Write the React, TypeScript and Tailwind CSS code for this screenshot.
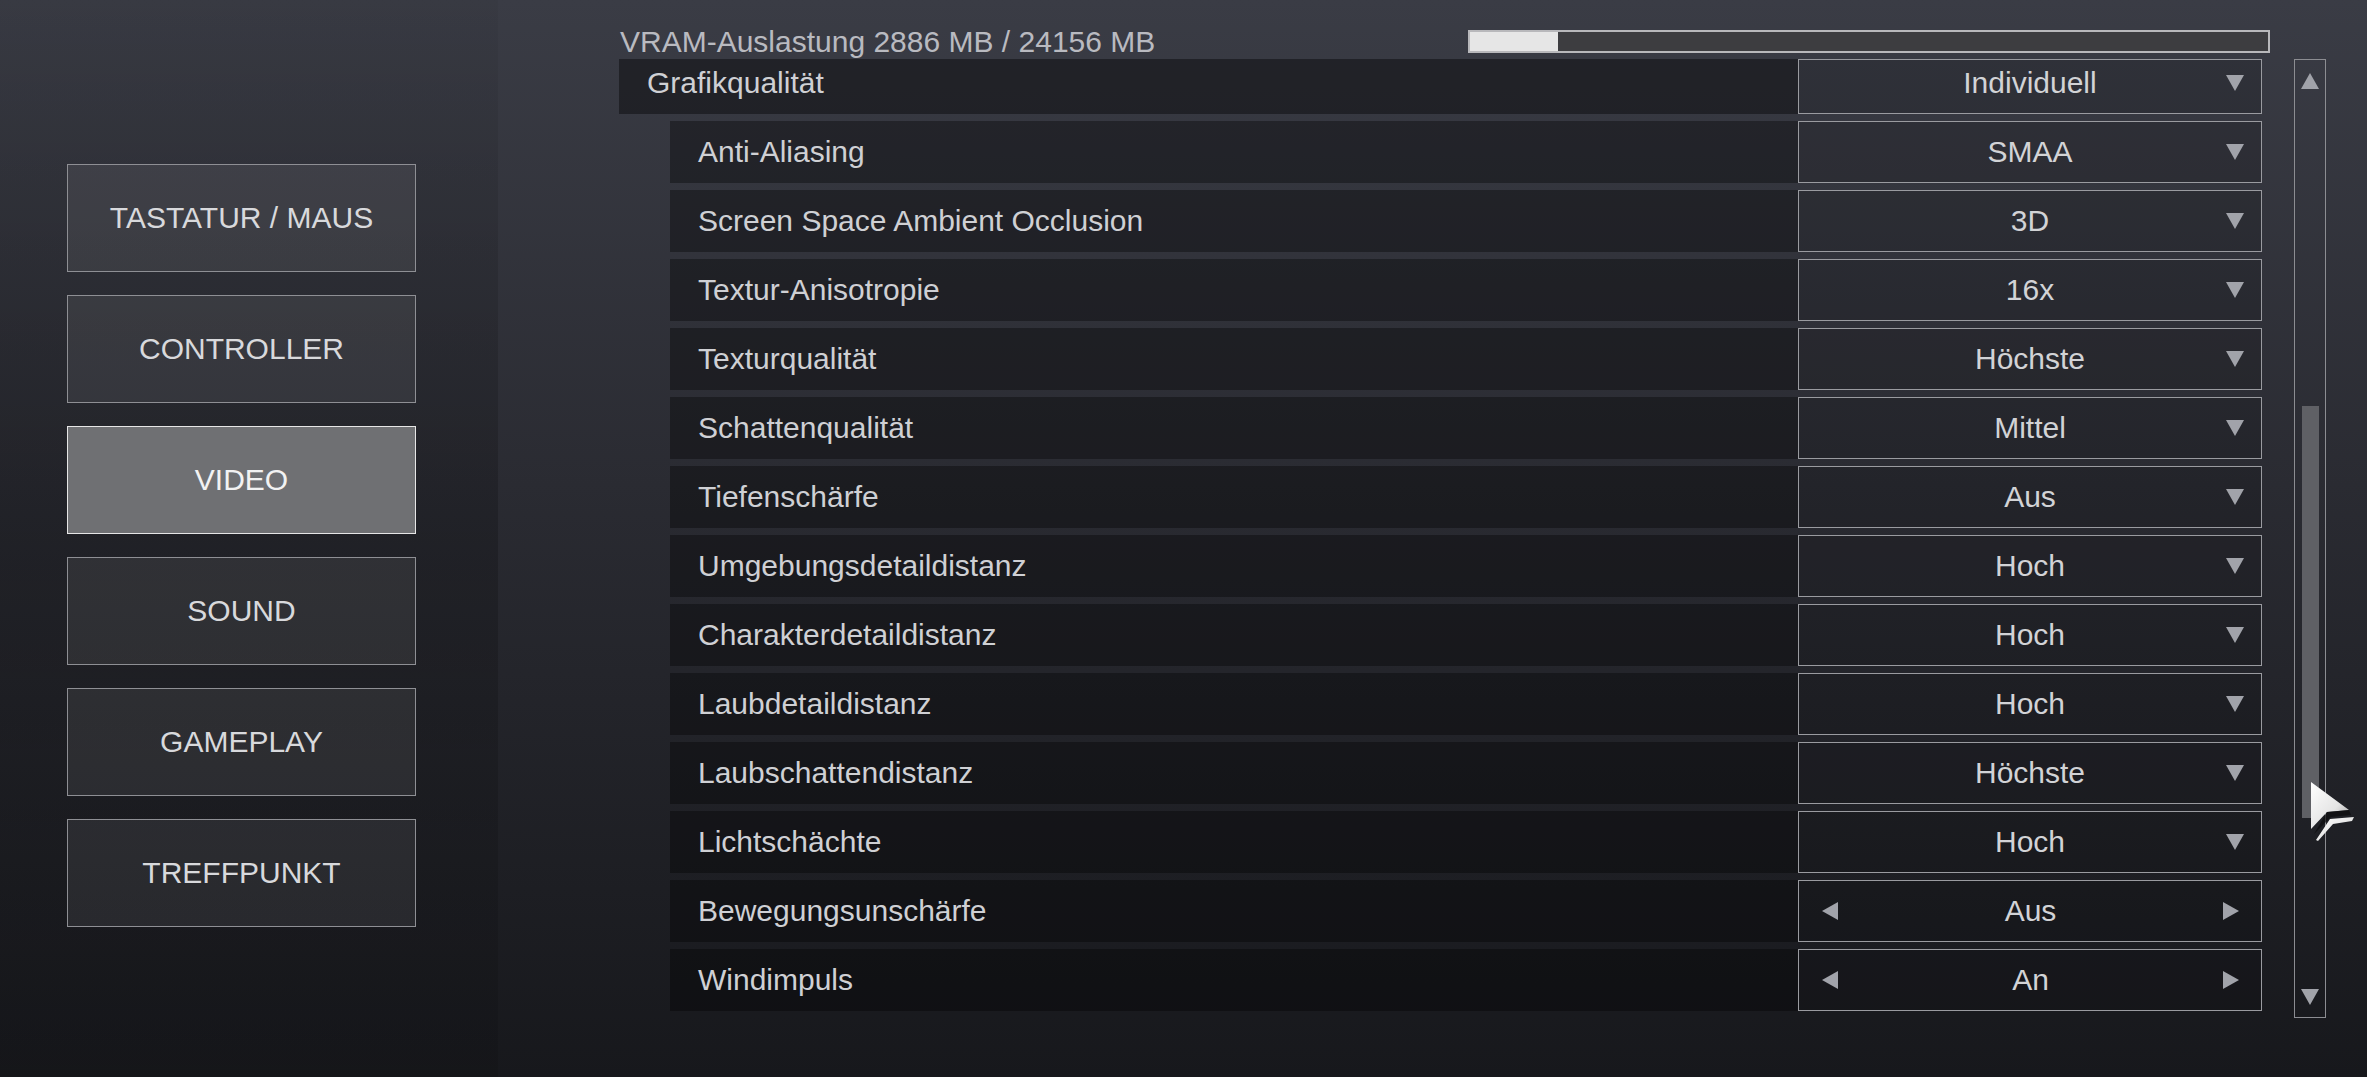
import React from "react";

type Dir = "up" | "down" | "left" | "right";

const Tri = ({ dir, className = "" }: { dir: Dir; className?: string }) => {
  const vertical = dir === "up" || dir === "down";
  const w = vertical ? 18 : 16;
  const h = vertical ? 16 : 18;
  const points = {
    up: "9,0 18,16 0,16",
    down: "0,0 18,0 9,16",
    left: "16,0 16,18 0,9",
    right: "0,0 16,9 0,18",
  }[dir];
  return (
    <svg width={w} height={h} viewBox={`0 0 ${w} ${h}`} className={`shrink-0 ${className}`}>
      <polygon points={points} fill="#a1a3aa" />
    </svg>
  );
};

const navItems = ["TASTATUR / MAUS", "CONTROLLER", "VIDEO", "SOUND", "GAMEPLAY", "TREFFPUNKT"];

interface Setting {
  label: string;
  value: string;
  toggle?: boolean;
}

const settings: Setting[] = [
  { label: "Anti-Aliasing", value: "SMAA" },
  { label: "Screen Space Ambient Occlusion", value: "3D" },
  { label: "Textur-Anisotropie", value: "16x" },
  { label: "Texturqualität", value: "Höchste" },
  { label: "Schattenqualität", value: "Mittel" },
  { label: "Tiefenschärfe", value: "Aus" },
  { label: "Umgebungsdetaildistanz", value: "Hoch" },
  { label: "Charakterdetaildistanz", value: "Hoch" },
  { label: "Laubdetaildistanz", value: "Hoch" },
  { label: "Laubschattendistanz", value: "Höchste" },
  { label: "Lichtschächte", value: "Hoch" },
  { label: "Bewegungsunschärfe", value: "Aus", toggle: true },
  { label: "Windimpuls", value: "An", toggle: true },
];

const Dropdown = ({ value, toggle, className = "" }: { value: string; toggle?: boolean; className?: string }) => {
  if (toggle) {
    return (
      <div className={`flex h-full w-[464px] shrink-0 items-center border border-[#9a9ba0] bg-black/15 pl-[23px] pr-[22px] ${className}`}>
        <Tri dir="left" />
        <span className="flex-1 text-center text-[#d2d3d6]">{value}</span>
        <Tri dir="right" />
      </div>
    );
  }
  return (
    <div className={`flex h-full w-[464px] shrink-0 items-center border border-[#9a9ba0] bg-black/15 px-[17px] ${className}`}>
      <div className="w-[18px]" />
      <span className="flex-1 text-center text-[#d2d3d6]">{value}</span>
      <Tri dir="down" />
    </div>
  );
};

const Cursor = () => (
  <svg
    width="48"
    height="62"
    viewBox="0 0 48 62"
    className="pointer-events-none absolute left-[2311px] top-[782px]"
  >
    <defs>
      <linearGradient id="cur" x1="0" y1="0" x2="1" y2="1">
        <stop offset="0" stopColor="#ffffff" />
        <stop offset="0.6" stopColor="#e4e4e4" />
        <stop offset="1" stopColor="#9c9c9c" />
      </linearGradient>
    </defs>
    <polygon points="0,0 38,28 16,30 0,47" fill="url(#cur)" />
    <polygon points="16,30 38,28 40,33 20,35 3,52" fill="#0b0b0d" opacity="0.7" />
    <polygon points="5,58 19,37 43,35 41,39 22,42 7,59" fill="url(#cur)" />
  </svg>
);

export default function App() {
  return (
    <div className="relative flex h-[1077px] w-[2367px] overflow-hidden bg-[linear-gradient(180deg,#3a3c45_0%,#2a2b32_45%,#17181c_100%)] font-['Liberation_Sans',Arial,sans-serif] text-[30px] leading-none text-[#cfd0d4]">
      {/* sidebar */}
      <aside className="flex w-[498px] shrink-0 flex-col gap-[23px] bg-[linear-gradient(180deg,rgba(0,0,0,0.04)_0%,rgba(0,0,0,0.2)_50%,rgba(0,0,0,0.1)_100%)] pl-[67px] pt-[164px]">
        {navItems.map((item) => {
          const active = item === "VIDEO";
          return (
            <div
              key={item}
              className={
                active
                  ? "flex h-[108px] w-[349px] items-center justify-center border border-[#e6e6e6] bg-[#6f7073] text-[#f2f2f2]"
                  : "flex h-[108px] w-[349px] items-center justify-center border border-[#8e8f94] bg-white/[0.07] text-[#d8d9dc]"
              }
            >
              {item}
            </div>
          );
        })}
      </aside>

      {/* main settings */}
      <main className="flex flex-col pl-[121px] pt-[24px]">
        <div className="flex h-[35px] w-[1651px] items-center">
          <span className="pl-[1px] text-[#b9bac0]">VRAM-Auslastung 2886 MB / 24156 MB</span>
          <div className="ml-auto flex h-[23px] w-[802px] border-2 border-[#b8b8bb] bg-[#3d3d40]">
            <div className="h-full w-[88px] bg-[#e6e6e6]" />
          </div>
        </div>

        <div className="flex gap-[32px]">
          <div className="flex w-[1643px] flex-col gap-[7px]">
            <div className="flex h-[55px]">
              <div className="flex flex-1 items-center bg-black/40 pb-[8px] pl-[28px]">Grafikqualität</div>
              <Dropdown value="Individuell" className="pb-[8px]" />
            </div>
            {settings.map((s) => (
              <div key={s.label} className="ml-[51px] flex h-[62px]">
                <div className="flex flex-1 items-center bg-black/35 pl-[28px]">{s.label}</div>
                <Dropdown value={s.value} toggle={s.toggle} />
              </div>
            ))}
          </div>

          <div className="flex h-[959px] w-[32px] flex-col items-center border border-[#8c8d92] pb-[12px] pt-[13px]">
            <Tri dir="up" />
            <div className="mt-[317px] h-[412px] w-[17px] bg-[#5f6065]" />
            <div className="flex-1" />
            <Tri dir="down" />
          </div>
        </div>
      </main>

      <Cursor />
    </div>
  );
}
